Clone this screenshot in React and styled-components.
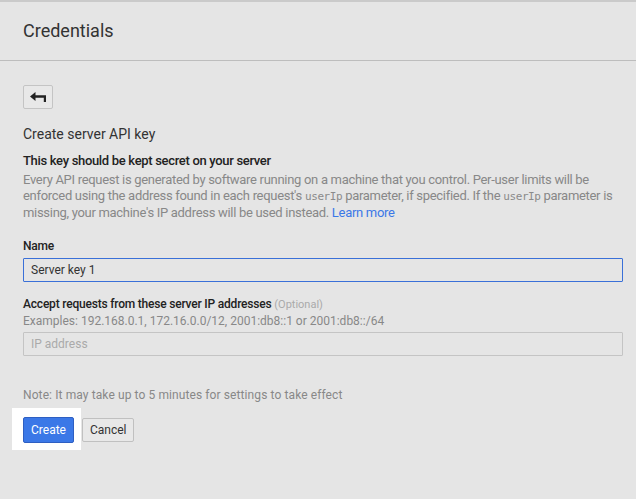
import React from "react";
import styled, { createGlobalStyle } from "styled-components";

const GlobalStyle = createGlobalStyle`
  html, body {
    margin: 0;
    padding: 0;
    background: #e5e5e5;
    font-family: Roboto, "Liberation Sans", Arial, sans-serif;
  }
`;

const Page = styled.div`
  min-height: 499px;
  background: #e5e5e5;
  border-top: 2px solid #cacaca;
  box-sizing: border-box;
`;

const Header = styled.header`
  height: 59px;
  display: flex;
  align-items: center;
  padding: 0 23px;
  border-bottom: 1px solid #bdbdbd;
  box-sizing: border-box;
`;

const Title = styled.h1`
  margin: 0;
  font-size: 18px;
  font-weight: 400;
  color: #333;
  padding-bottom: 2px;
`;

const Body = styled.main`
  padding: 24px 13px 0 23px;
`;

const BackButton = styled.button`
  width: 30px;
  height: 24px;
  padding: 0;
  display: flex;
  align-items: center;
  justify-content: center;
  background: #e8e8e8;
  border: 1px solid #c4c4c4;
  border-radius: 2px;
  cursor: pointer;
`;

const SubTitle = styled.h2`
  margin: 15px 0 0;
  font-size: 14px;
  line-height: 20px;
  font-weight: 400;
  color: #333;
`;

const Strong = styled.div`
  margin-top: 9px;
  font-size: 13px;
  line-height: 16px;
  font-weight: 500;
  letter-spacing: -0.32px;
  color: #222;
`;

const Paragraph = styled.p`
  margin: 3px 0 0;
  font-size: 13px;
  line-height: 16px;
  letter-spacing: -0.3px;
  white-space: nowrap;
  color: #888;
`;

const Code = styled.code`
  font-family: "DejaVu Sans Mono", "Liberation Mono", monospace;
  font-size: 11px;
  letter-spacing: -0.4px;
  color: #8a8a8a;
`;

const Link = styled.a`
  color: #3b78e7;
  text-decoration: none;
`;

const Field = styled.div`
  margin-top: ${(p) => p.$top}px;
`;

const Label = styled.label`
  display: block;
  font-size: 12px;
  line-height: 16px;
  font-weight: 500;
  letter-spacing: -0.2px;
  color: #222;
`;

const Optional = styled.span`
  font-size: 11px;
  font-weight: 400;
  letter-spacing: 0;
  color: #aaa;
`;

const Hint = styled.div`
  font-size: 12px;
  line-height: 16px;
  color: #888;
`;

const Input = styled.input`
  display: block;
  width: 100%;
  height: 24px;
  box-sizing: border-box;
  margin-top: ${(p) => p.$gap}px;
  padding: 0 7px;
  font-family: Roboto, "Liberation Sans", Arial, sans-serif;
  font-size: 12px;
  color: #333;
  background: #e5e5e5;
  border: 1px solid ${(p) => (p.$active ? "#3a70d8" : "#c4c4c4")};
  border-radius: 1px;
  outline: none;
  &::placeholder {
    color: #aaa;
  }
`;

const Note = styled.div`
  margin-top: 31px;
  font-size: 12px;
  line-height: 16px;
  letter-spacing: 0.1px;
  color: #888;
`;

const Actions = styled.div`
  display: flex;
  align-items: center;
  gap: 1px;
  margin: 5px 0 0 -11px;
`;

const Focus = styled.div`
  background: #fff;
  padding: 9px 7px 7px 11px;
`;

const PrimaryButton = styled.button`
  height: 26px;
  padding: 0 7px;
  font-family: Roboto, "Liberation Sans", Arial, sans-serif;
  font-size: 12px;
  color: #fff;
  background: #3b78e7;
  border: 1px solid #2e5fc2;
  border-radius: 2px;
`;

const SecondaryButton = styled.button`
  height: 24px;
  padding: 0 7px;
  font-family: Roboto, "Liberation Sans", Arial, sans-serif;
  font-size: 12px;
  color: #333;
  background: #e8e8e8;
  border: 1px solid #c0c0c0;
  border-radius: 2px;
  margin-top: 2px;
`;

const BackIcon = () => (
  <svg width="16" height="10" viewBox="0 0 16 10">
    <path d="M0 4.5 L5.5 0 V9 Z" fill="#222" />
    <path d="M4 3.3 H16 V10 H13.8 V5.7 H4 Z" fill="#222" />
  </svg>
);

export default function App() {
  return (
    <Page>
      <GlobalStyle />
      <Header>
        <Title>Credentials</Title>
      </Header>
      <Body>
        <BackButton aria-label="Back">
          <BackIcon />
        </BackButton>
        <SubTitle>Create server API key</SubTitle>
        <Strong>This key should be kept secret on your server</Strong>
        <Paragraph>
          Every API request is generated by software running on a machine that
          you control. Per-user limits will be
          <br />
          enforced using the address found in each request's{" "}
          <Code>userIp</Code> parameter, if specified. If the{" "}
          <Code>userIp</Code> parameter is
          <br />
          missing, your machine's IP address will be used instead.{" "}
          <Link href="#">Learn more</Link>
        </Paragraph>
        <Field $top={17}>
          <Label>Name</Label>
          <Input $gap={4} $active defaultValue="Server key 1" />
        </Field>
        <Field $top={14}>
          <Label>
            Accept requests from these server IP addresses{" "}
            <Optional>(Optional)</Optional>
          </Label>
          <Hint>
            Examples: 192.168.0.1, 172.16.0.0/12, 2001:db8::1 or 2001:db8::/64
          </Hint>
          <Input $gap={3} placeholder="IP address" />
        </Field>
        <Note>Note: It may take up to 5 minutes for settings to take effect</Note>
        <Actions>
          <Focus>
            <PrimaryButton>Create</PrimaryButton>
          </Focus>
          <SecondaryButton>Cancel</SecondaryButton>
        </Actions>
      </Body>
    </Page>
  );
}
